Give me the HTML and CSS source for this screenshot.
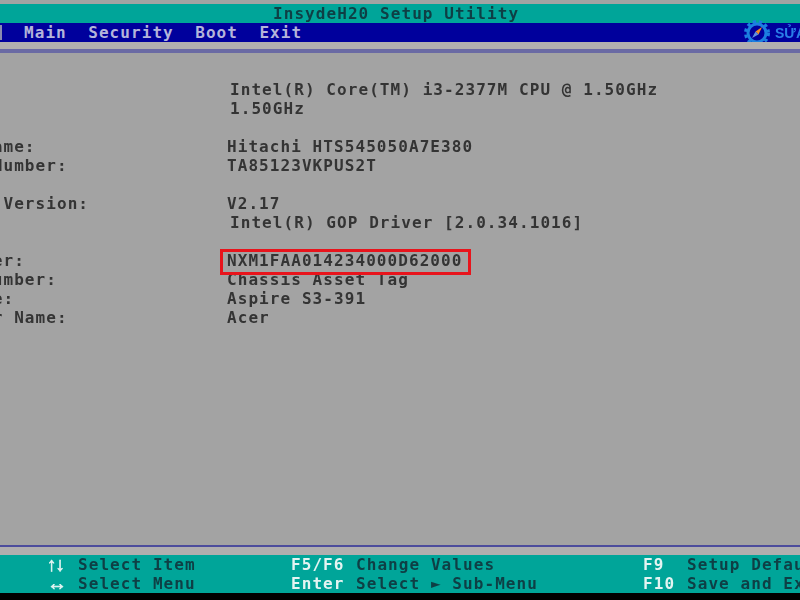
FILE: index.html
```html
<!DOCTYPE html>
<html lang="en">
<head>
<meta charset="utf-8">
<title>InsydeH20 Setup Utility</title>
<link rel="stylesheet" href="styles.css">
</head>
<body>
<div class="screen">
  <header class="title">InsydeH20 Setup Utility</header>
  <nav class="menu">
    <span class="notch"></span>
    <span class="tab">Main</span>
    <span class="tab">Security</span>
    <span class="tab">Boot</span>
    <span class="tab">Exit</span>
    <span class="logo">
      <svg class="gear" width="28" height="28" viewBox="0 0 28 28">
        <circle cx="14" cy="14" r="9" fill="#00009c" stroke="#1c7fe0" stroke-width="3"/>
        <circle cx="14" cy="14" r="11.5" fill="none" stroke="#1c7fe0" stroke-width="3" stroke-dasharray="3.2 3"/>
        <path d="M19 8 L15.5 15.5 L12.5 12.5 Z" fill="#f08a24"/>
        <path d="M9 19 L12.5 12.5 L15.5 15.5 Z" fill="#5f8fe0"/>
      </svg>
      <span class="brand">SỬA</span>
    </span>
  </nav>
  <div class="band-top"><div class="rule-top"></div></div>
  <main class="info">
    <div class="row"><span class="label">CPU Type:</span><span class="value shifted">Intel(R) Core(TM) i3-2377M CPU @ 1.50GHz</span></div>
    <div class="row"><span class="label">CPU Speed:</span><span class="value shifted">1.50GHz</span></div>
    <div class="row"></div>
    <div class="row"><span class="label">HDD Model Name:</span><span class="value">Hitachi HTS545050A7E380</span></div>
    <div class="row"><span class="label">HDD Serial Number:</span><span class="value">TA85123VKPUS2T</span></div>
    <div class="row"></div>
    <div class="row"><span class="label">System BIOS Version:</span><span class="value">V2.17</span></div>
    <div class="row"><span class="label">VGA Version:</span><span class="value shifted">Intel(R) GOP Driver [2.0.34.1016]</span></div>
    <div class="row"></div>
    <div class="row"><span class="label">Serial Number:</span><span class="value">NXM1FAA014234000D62000</span></div>
    <div class="row"><span class="label">Asset Tag Number:</span><span class="value">Chassis Asset Tag</span></div>
    <div class="row"><span class="label">Product Name:</span><span class="value">Aspire S3-391</span></div>
    <div class="row"><span class="label">Manufacturer Name:</span><span class="value">Acer</span></div>
  </main>
  <div class="highlight"></div>
  <div class="band-bottom"></div>
  <footer class="keys">
    <div class="keygroup first">
      <span class="key arrows">↑↓</span><span class="desc">Select Item</span>
      <span class="key arrows wide">↔</span><span class="desc">Select Menu</span>
    </div>
    <div class="keygroup second">
      <span class="key">F5/F6</span><span class="desc">Change Values</span>
      <span class="key">Enter</span><span class="desc">Select ► Sub-Menu</span>
    </div>
    <div class="keygroup third">
      <span class="key">F9</span><span class="desc">Setup Defaults</span>
      <span class="key">F10</span><span class="desc">Save and Exit</span>
    </div>
  </footer>
  <div class="base"></div>
</div>
</body>
</html>
```
FILE: styles.css
```css
* { box-sizing: border-box; }
html, body { margin: 0; padding: 0; background: #000; }
.screen {
  position: relative;
  width: 800px;
  height: 600px;
  overflow: hidden;
  display: flex;
  flex-direction: column;
  padding-top: 4px;
  background: #a3a3a3;
  font-family: "DejaVu Sans Mono", "Liberation Mono", monospace;
  font-size: 16px;
  font-weight: 700;
  letter-spacing: 1.07px;
  white-space: nowrap;
  color: #343434;
}
.title {
  height: 19px;
  line-height: 20px;
  padding-left: 273px;
  background: #00a599;
  color: #0e3f45;
}
.menu {
  position: relative;
  height: 19px;
  line-height: 19px;
  display: flex;
  gap: 21.4px;
  padding-left: 24px;
  background: #00009c;
  color: #b4b4da;
}
.notch {
  position: absolute;
  left: 0;
  top: 2px;
  width: 2px;
  height: 15px;
  background: #8a8ab0;
}
.logo {
  position: absolute;
  left: 743px;
  top: -4px;
  display: flex;
  align-items: center;
  gap: 4px;
  letter-spacing: 0;
}
.brand {
  color: #2a7fe8;
  font-family: "Liberation Sans", sans-serif;
  font-size: 14px;
  font-weight: 700;
}
.band-top {
  height: 11px;
  padding-top: 7px;
  background: #b2b0b0;
}
.rule-top {
  height: 4px;
  background: #6a6aa4;
}
.info {
  flex: 1;
  padding-top: 27px;
}
.row {
  position: relative;
  height: 19px;
  line-height: 19px;
}
.label {
  position: absolute;
  left: -125px;
}
.value {
  position: absolute;
  left: 227px;
}
.value.shifted { left: 230px; }
.highlight {
  position: absolute;
  left: 220px;
  top: 249px;
  width: 251px;
  height: 26px;
  border: 3px solid #e8141c;
}
.band-bottom {
  height: 10px;
  border-top: 2px solid #4c4c9c;
  background: #b0aeae;
}
.keys {
  height: 38px;
  display: grid;
  grid-template-columns: 244px 352px 1fr;
  padding-left: 47px;
  background: #00a599;
  color: #0e3f45;
  line-height: 19px;
}
.keygroup {
  display: grid;
  grid-auto-rows: 19px;
}
.first { grid-template-columns: 31px 1fr; }
.second { grid-template-columns: 65px 1fr; }
.third { grid-template-columns: 44px 1fr; }
.key { color: #e4f4f2; }
.arrows {
  font-family: "Liberation Sans", sans-serif;
  font-size: 19px;
  letter-spacing: -1px;
  -webkit-text-stroke: 0.6px #e4f4f2;
}
.arrows.wide { font-size: 20px; }
.base { height: 7px; background: #000; }
.screen > * { filter: blur(0.6px); }
```
